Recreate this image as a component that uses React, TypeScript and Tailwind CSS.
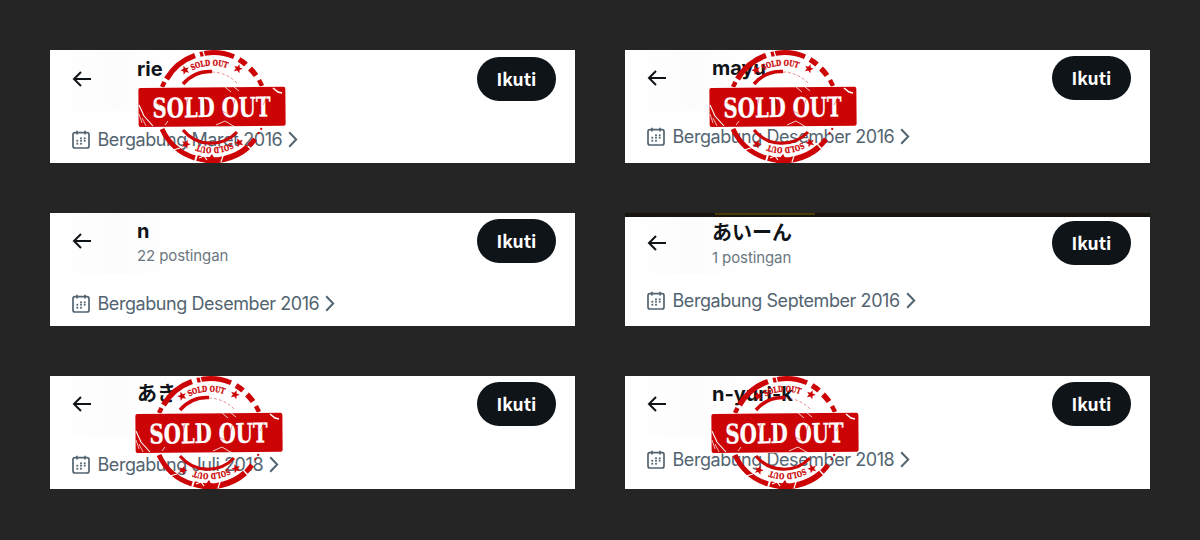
import { clsx } from "clsx";

interface Profile {
  name: string;
  posts?: string;
  joined: string;
  headerClass: string;
  joinedClass: string;
  stampClass?: string;
  strip?: boolean;
}

const PROFILES: Profile[] = [
  {
    name: "rie",
    joined: "Bergabung Maret 2016",
    headerClass: "pt-[7px]",
    joinedClass: "pb-[12px]",
    stampClass: "left-[86.5px]",
  },
  {
    name: "mayu",
    joined: "Bergabung Desember 2016",
    headerClass: "pt-[6px]",
    joinedClass: "pb-[15px]",
    stampClass: "left-[82.5px]",
  },
  {
    name: "n",
    posts: "22 postingan",
    joined: "Bergabung Desember 2016",
    headerClass: "pt-[6px]",
    joinedClass: "pb-[11px]",
  },
  {
    name: "あいーん",
    posts: "1 postingan",
    joined: "Bergabung September 2016",
    headerClass: "pt-[8px]",
    joinedClass: "pb-[14px]",
    strip: true,
  },
  {
    name: "あき",
    joined: "Bergabung Juli 2018",
    headerClass: "pt-[6px]",
    joinedClass: "pb-[13px]",
    stampClass: "left-[84px]",
  },
  {
    name: "n-yuri-k",
    joined: "Bergabung Desember 2018",
    headerClass: "pt-[6px]",
    joinedClass: "pb-[18px]",
    stampClass: "left-[84.5px]",
  },
];

function BackIcon() {
  return (
    <svg width="20" height="18" viewBox="0 0 20 18" fill="none" stroke="#0f1419" strokeWidth="2">
      <path d="M9 2 2 9l7 7M2 9h17" />
    </svg>
  );
}

function CalendarIcon() {
  return (
    <svg
      className="mb-[2px]"
      width="18"
      height="19"
      viewBox="0 0 18 19"
      fill="none"
      stroke="#536471"
      strokeWidth="1.7"
    >
      <rect x="1" y="2.6" width="16" height="15.4" rx="2" />
      <path d="M5 .8v3.6M13 .8v3.6" />
      <g fill="#536471" stroke="none">
        <rect x="8.1" y="7.4" width="1.8" height="1.8" />
        <rect x="11.8" y="7.4" width="1.8" height="1.8" />
        <rect x="4.4" y="9.8" width="1.8" height="1.8" />
        <rect x="8.1" y="9.8" width="1.8" height="1.8" />
        <rect x="11.8" y="9.8" width="1.8" height="1.8" />
        <rect x="4.4" y="12.8" width="1.8" height="1.8" />
        <rect x="8.1" y="12.8" width="1.8" height="1.8" />
      </g>
    </svg>
  );
}

function ChevronIcon() {
  return (
    <svg
      className="mb-px"
      width="10"
      height="17"
      viewBox="0 0 10 17"
      fill="none"
      stroke="#536471"
      strokeWidth="2"
    >
      <path d="m1.2 1.2 7 7.3-7 7.3" />
    </svg>
  );
}

const STAR = "M0-5 1.4-1.6 5-1.4 2.2.9 3.2 4.5 0 2.5-3.2 4.5-2.2.9-5-1.4-1.4-1.6Z";

function Stamp({ className }: { className: string }) {
  return (
    <svg
      className={clsx("absolute top-[-0.3px]", className)}
      width="150"
      height="114"
      viewBox="0 0 150 114"
    >
      <defs>
        <path id="stamp-arc" d="M33.5 57a41.5 41.5 0 0 1 83 0" />
      </defs>
      {/* Outer ring, worn away in places */}
      <g fill="none" stroke="#cc0405">
        <path strokeWidth="4.5" d="M25 37l2.5-5" />
        <path strokeWidth="5.5" d="M29.5 29A54 54 0 0 1 58 5.5" />
        <path strokeWidth="5" d="M63 4.3a54 54 0 0 1 34 2.4" />
        <path strokeWidth="5.5" d="M102 9.5a54 54 0 0 1 7 5M113 18.5a54 54 0 0 1 6 7" />
        <path strokeWidth="4.5" d="M122 30l3 6" />
        <path strokeWidth="5" d="M25 79a54 54 0 0 0 33 29" />
        <path strokeWidth="6" d="M60 108a54 54 0 0 0 51-11" />
        <path strokeWidth="5" d="M112 96a54 54 0 0 0 6-7" />
        <path strokeWidth="2" strokeDasharray="2 3" d="M121 84l5-8" />
        <path strokeWidth="3.5" d="M46 34a36 36 0 0 1 29-12.5" />
        <path strokeWidth="1" strokeDasharray="3 2" opacity=".45" d="M75 22a36 36 0 0 1 26 12" />
        <path strokeWidth="3.2" d="M46 80a36 36 0 0 0 54 2" />
      </g>
      <g fill="#cc0405">
        <path d="M75 104l5 9H68z" />
        <path d={STAR} transform="translate(48 20) rotate(-20) scale(.9)" />
        <path d={STAR} transform="translate(101 18.5) rotate(20) scale(.9)" />
        <path d={STAR} transform="translate(49 94) rotate(20) scale(.9)" />
        <path d={STAR} transform="translate(102 92.5) rotate(-20) scale(.9)" />
      </g>
      <g
        fill="#cc0405"
        stroke="#cc0405"
        strokeWidth=".3"
        fontFamily="'DejaVu Serif', serif"
        fontWeight="700"
        fontSize="8"
      >
        <text textAnchor="middle" textLength="36" lengthAdjust="spacingAndGlyphs">
          <textPath href="#stamp-arc" startOffset="48%">SOLD OUT</textPath>
        </text>
        <g transform="rotate(180 75 56.5)">
          <text textAnchor="middle" textLength="36" lengthAdjust="spacingAndGlyphs">
            <textPath href="#stamp-arc" startOffset="48%">SOLD OUT</textPath>
          </text>
        </g>
      </g>
      {/* Banner */}
      <g transform="rotate(-.5 75 57)">
        <rect x="1" y="36.8" width="148" height="40" rx="2" fill="#fff" />
        <rect x="1.5" y="37.3" width="147" height="39" rx="2" fill="#cc0405" />
        <text
          x="15.5"
          y="67"
          fill="#fff"
          stroke="#fff"
          strokeWidth=".3"
          fontFamily="'DejaVu Serif', serif"
          fontWeight="700"
          fontSize="27"
          textLength="118"
          lengthAdjust="spacingAndGlyphs"
        >
          SOLD OUT
        </text>
      </g>
      {/* Scratches */}
      <g fill="none" stroke="#fff">
        <path strokeWidth="1.1" d="m2 55 5 11 9 10" />
        <path strokeWidth=".7" d="M2 64l3 9M5 68l4 8" />
        <path strokeWidth="1.6" d="m136 38 5 4 4 1" />
        <path strokeWidth=".8" d="m88 37 6 5M97 37l5 4M79 75l9-4 5 3 5 3M28 75l3-4" />
        <path strokeWidth="1.2" d="m60 1 3 9M66 1l2 7M36 100l7-2M62 108l5-2 3 4M86 106l-2 6M110 16l-5 5" />
      </g>
      <g stroke="#cc0405" strokeWidth=".8" opacity=".5">
        <path d="M18 52l5 4M51 48l-2 9M67 47l2 7-1 6M99 46l-3 11M130 47l-4 8M85 61l6 3" />
      </g>
    </svg>
  );
}

function ProfileCard({ profile }: { profile: Profile }) {
  return (
    <article className="relative flex h-[113px] flex-col justify-between overflow-hidden bg-white">
      <div className="absolute left-0 top-0 h-[61px] w-[130px] bg-linear-to-r from-white via-[#fcfcfc] to-white" />
      {profile.strip && (
        <div className="absolute inset-x-0 top-0 h-1 bg-[#17130f]">
          <div className="ml-[90px] h-[2px] w-[100px] bg-[#4a3a06]" />
        </div>
      )}
      <header className={clsx("relative flex items-start pl-[22px] pr-[19px]", profile.headerClass)}>
        <div className="flex h-11 w-[65px] items-center">
          <BackIcon />
        </div>
        <div className="flex-1">
          <h2 className="h-[24px] text-[20px] leading-[24px] font-bold text-[#0f1419]">{profile.name}</h2>
          {profile.posts && (
            <p className="mt-[3px] text-[15px] leading-[20px] tracking-[-0.1px] text-[#6b7781]">
              {profile.posts}
            </p>
          )}
        </div>
        <button className="h-11 w-[79px] rounded-full bg-[#0f1419] font-['Noto_Sans_CJK_JP',sans-serif] text-[17.5px] font-bold text-white">
          Ikuti
        </button>
      </header>
      <div className={clsx("relative flex items-center pl-[22px] text-[#536471]", profile.joinedClass)}>
        <CalendarIcon />
        <span className="ml-[7.5px] mr-[6px] text-[18px] leading-[22px] tracking-[-0.43px]">
          {profile.joined}
        </span>
        <ChevronIcon />
      </div>
      {profile.stampClass && <Stamp className={profile.stampClass} />}
    </article>
  );
}

export default function App() {
  return (
    <main className="h-[540px] w-[1200px] bg-[#252525] px-[50px] pt-[50px] font-['Inter','Noto_Sans_CJK_JP',sans-serif]">
      <div className="grid grid-cols-2 gap-[50px]">
        {PROFILES.map((profile) => (
          <ProfileCard key={profile.name} profile={profile} />
        ))}
      </div>
    </main>
  );
}
